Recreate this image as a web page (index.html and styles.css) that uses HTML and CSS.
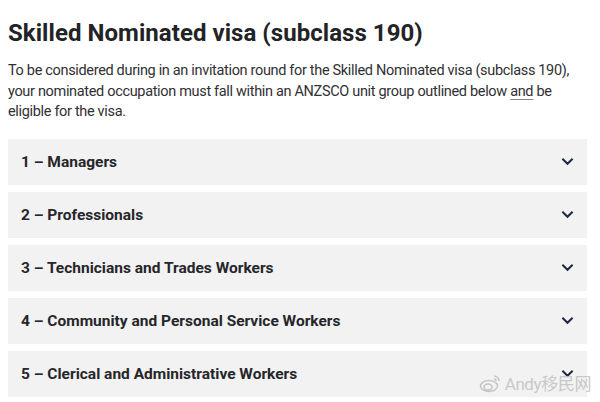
FILE: index.html
```html
<!DOCTYPE html>
<html lang="en">
<head>
    <meta charset="UTF-8">
    <meta name="viewport" content="width=device-width, initial-scale=1.0">
    <title>Skilled Nominated visa (subclass 190)</title>
    <link rel="stylesheet" href="styles.css">
</head>
<body>
    <h1 class="title">Skilled Nominated visa (subclass 190)</h1>
    <p class="intro">To be considered during in an invitation round for the Skilled Nominated visa (subclass 190), your nominated occupation must fall within an ANZSCO unit group outlined below <u>and</u> be eligible for the visa.</p>

    <div class="accordion">
        <div class="acc-item"><span>1 – Managers</span><svg class="chev" viewBox="0 0 14 9"><path d="M1.5 1.5 7 7l5.5-5.5"/></svg></div>
        <div class="acc-item"><span>2 – Professionals</span><svg class="chev" viewBox="0 0 14 9"><path d="M1.5 1.5 7 7l5.5-5.5"/></svg></div>
        <div class="acc-item"><span>3 – Technicians and Trades Workers</span><svg class="chev" viewBox="0 0 14 9"><path d="M1.5 1.5 7 7l5.5-5.5"/></svg></div>
        <div class="acc-item"><span>4 – Community and Personal Service Workers</span><svg class="chev" viewBox="0 0 14 9"><path d="M1.5 1.5 7 7l5.5-5.5"/></svg></div>
        <div class="acc-item"><span>5 – Clerical and Administrative Workers</span><svg class="chev" viewBox="0 0 14 9"><path d="M1.5 1.5 7 7l5.5-5.5"/></svg></div>
    </div>

    <div class="watermark">
        <svg viewBox="0 0 24 20" class="wb"><ellipse cx="10" cy="13" rx="8.5" ry="5.5"/><ellipse cx="9" cy="14" rx="4" ry="3"/><path d="M15 3a5 5 0 0 1 5 5M15 6a2 2 0 0 1 2 2"/></svg>
        <span>Andy移民网</span>
    </div>
</body>
</html>
```

FILE: styles.css
```css
body {
    margin: 0;
    padding: 0 13px 0 8px;
    font-family: Roboto, "Noto Sans CJK SC", sans-serif;
    color: #1d1d1f;
    background: #fff;
    overflow: hidden;
    position: relative;
    height: 402px;
}
.title {
    margin: 0;
    padding-top: 19px;
    font-size: 24px;
    line-height: 28px;
    font-weight: 700;
    letter-spacing: 0.05px;
    color: #222326;
}
.intro {
    margin: 14px 0 0;
    font-size: 14.5px;
    line-height: 20.5px;
    letter-spacing: -0.33px;
    color: #303033;
}
.intro u {
    text-decoration-color: #888;
    text-underline-offset: 3px;
}
.accordion {
    margin-top: 16px;
    display: flex;
    flex-direction: column;
    gap: 7px;
}
.acc-item {
    height: 46px;
    background: #f2f2f2;
    display: flex;
    align-items: center;
    justify-content: space-between;
    padding: 0 13px;
    font-size: 15.5px;
    font-weight: 700;
    color: #26262a;
}
.chev {
    width: 13px;
    height: 9px;
}
.chev path {
    fill: none;
    stroke: #1f2a44;
    stroke-width: 2.2;
}
.watermark {
    position: absolute;
    right: 9px;
    bottom: 7px;
    display: flex;
    align-items: center;
    gap: 2px;
    color: rgba(195, 195, 195, 0.9);
    font-size: 17px;
    letter-spacing: -0.4px;
}
.wb {
    width: 24px;
    height: 20px;
}
.wb ellipse, .wb path {
    fill: none;
    stroke: rgba(195, 195, 195, 0.95);
    stroke-width: 1.5;
}
```
